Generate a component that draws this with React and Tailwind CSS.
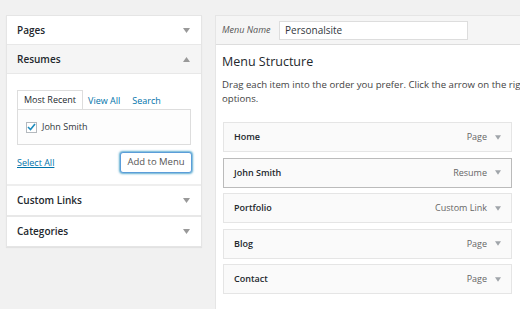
import React from "react";

const font = { fontFamily: "'Open Sans', 'Liberation Sans', sans-serif" };

const Arrow = ({ up = false, className = "" }) => (
  <svg width="7" height="5" viewBox="0 0 7 5" className={className}>
    {up ? (
      <path d="M0 5 L3.5 0 L7 5 Z" fill="currentColor" />
    ) : (
      <path d="M0 0 L7 0 L3.5 5 Z" fill="currentColor" />
    )}
  </svg>
);

const SectionHeader = ({ title, open = false, className = "h-[29px] border-b" }) => (
  <div
    className={`flex items-center justify-between pl-[10px] pr-[11px] border-[#e8e8e8] ${className} ${
      open ? "bg-[#f5f5f5]" : "bg-white"
    }`}
  >
    <span className="text-[10px] font-semibold text-[#23282d]">{title}</span>
    <Arrow up={open} className="text-[#999]" />
  </div>
);

const menuItems = [
  { title: "Home", type: "Page" },
  { title: "John Smith", type: "Resume", active: true },
  { title: "Portfolio", type: "Custom Link" },
  { title: "Blog", type: "Page" },
  { title: "Contact", type: "Page" },
];

export default function App() {
  return (
    <div
      className="w-[520px] h-[309px] bg-[#f1f1f1] overflow-hidden flex items-start pt-[15px] pl-[6px] gap-[13px]"
      style={font}
    >
      {/* ================= LEFT ACCORDION ================= */}
      <div className="w-[196px] shrink-0 bg-white border border-[#e5e5e5] shadow-[0_1px_1px_rgba(0,0,0,0.06)]">
        <SectionHeader title="Pages" />
        <SectionHeader title="Resumes" open />

        <div className="px-[10px] pt-[17px] pb-[11px] border-b-[2px] border-[#eeeeee]">
          <div className="flex items-end text-[9px] h-[18px]">
            <div className="h-[19px] px-[6px] border border-b-0 border-[#dddddd] bg-white text-[#23282d] flex items-center relative z-10">
              Most Recent
            </div>
            <span className="ml-[5px] text-[#0073aa] leading-[17px]">View All</span>
            <span className="ml-[12px] text-[#0073aa] leading-[17px]">Search</span>
          </div>
          <div className="h-[36px] border border-[#dddddd] bg-[#fdfdfd] flex items-center pl-[8px]">
            <span className="w-[11px] h-[11px] border border-[#b4b9be] bg-white flex items-center justify-center">
              <svg width="9" height="8" viewBox="0 0 9 8">
                <path d="M1 4 L3.5 6.5 L8 1" stroke="#1e8cbe" strokeWidth="1.6" fill="none" />
              </svg>
            </span>
            <span className="ml-[5px] text-[9px] text-[#32373c]">John Smith</span>
          </div>
          <div className="flex items-center justify-between mt-[7px]">
            <span className="text-[9px] text-[#0073aa] underline">Select All</span>
            <button className="w-[72px] h-[21px] border border-[#5b9dd9] rounded-[3px] bg-white text-[9.5px] text-[#555] shadow-[0_0_2px_1px_rgba(30,140,190,0.7)] mr-[-1px]">
              Add to Menu
            </button>
          </div>
        </div>

        <SectionHeader title="Custom Links" className="h-[31px] border-b-[2px]" />
        <SectionHeader title="Categories" className="h-[29px]" />
      </div>

      {/* ================= RIGHT MENU EDITOR ================= */}
      <div className="w-[320px] shrink-0 h-[320px] bg-white border border-[#e5e5e5]">
        <div className="h-[29px] bg-[#f5f5f5] border-b border-[#dddddd] flex items-center pl-[6px]">
          <span className="w-[57px] text-[9px] italic text-[#555]">Menu Name</span>
          <div className="w-[189px] h-[19px] bg-white border border-[#dddddd] flex items-center pl-[5px] text-[10px] text-[#32373c]">
            Personalsite
          </div>
        </div>

        <div className="pl-[6px]">
          <div className="mt-[9px] text-[12.5px] text-[#23282d] leading-[16px]">Menu Structure</div>
          <div className="mt-[8px] text-[9.6px] text-[#444] leading-[14px] whitespace-nowrap">
            <div>Drag each item into the order you prefer. Click the arrow on the right of the item to reveal additional configuration</div>
            <div>options.</div>
          </div>
        </div>

        <div className="pl-[7px] pt-[16px] flex flex-col gap-[5.5px]">
          {menuItems.map((item) => (
            <div
              key={item.title}
              className={`w-[289px] h-[30px] flex items-center justify-between pl-[10px] pr-[10px] bg-[#fafafa] border ${
                item.active ? "border-[#bbbbbb]" : "border-[#e5e5e5]"
              }`}
            >
              <span className="text-[9px] font-semibold text-[#23282d]">{item.title}</span>
              <span className="flex items-center gap-[8px] text-[9px] text-[#666]">
                {item.type}
                <Arrow className="text-[#a0a5aa] w-[6px]" />
              </span>
            </div>
          ))}
        </div>
      </div>
    </div>
  );
}
